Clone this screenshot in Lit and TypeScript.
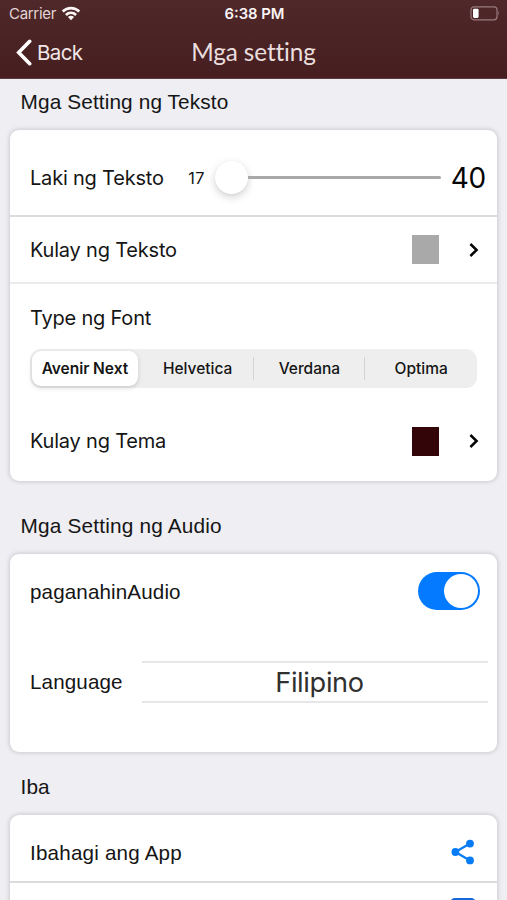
import { LitElement, html, css, svg } from "lit";
import { customElement, state } from "lit/decorators.js";
import { classMap } from "lit/directives/class-map.js";

const chevron = html`<svg class="chevron" width="12" height="18" viewBox="0 0 12 18">
  <path d="M2.4 3 L8.6 9 L2.4 15" fill="none" stroke="#050505" stroke-width="2.5" />
</svg>`;

@customElement("app-root")
export class AppRoot extends LitElement {
  @state() private font = "Avenir Next";

  private fonts = ["Avenir Next", "Helvetica", "Verdana", "Optima"];

  static styles = css`
    :host {
      display: block;
      height: 900px;
      overflow: hidden;
      background: #eeeef3;
      color: #151515;
      font-family: Inter, "Liberation Sans", sans-serif;
      font-size: 20px;
    }
    * { box-sizing: border-box; }
    svg { display: block; flex: none; }
    span, h1, h2 { white-space: nowrap; }
    header {
      height: 79px;
      background: linear-gradient(#4f282a, #461e20);
      border-bottom: 1px solid #5d3a3d;
      color: #f0e6e6;
    }
    .status, .nav {
      display: grid;
      grid-template-columns: 1fr auto 1fr;
      align-items: center;
    }
    .status { height: 27px; padding: 0 7px 0 9px; font-size: 15px; }
    .carrier { display: flex; align-items: center; gap: 5px; color: #e2d5d5; }
    .carrier-name { letter-spacing: -0.3px; }
    .clock { font-weight: 600; letter-spacing: 0; font-size: 14.8px; color: #fbf5f5; }
    .battery { justify-self: end; }
    .nav { height: 51px; padding: 0 15px; }
    .back { display: flex; align-items: center; gap: 4px; font-size: 20.5px; letter-spacing: -0.6px; }
    .title {
      margin: 0;
      padding-bottom: 2px;
      font: 400 24.3px Lato, sans-serif;
      letter-spacing: -0.1px;
      color: #eadede;
    }
    h2 {
      margin: 0;
      padding-left: 20.5px;
      font: 400 20.8px/24px "Liberation Sans", sans-serif;
      letter-spacing: 0.12px;
    }
    .h-text { padding-top: 11px; height: 51px; }
    .h-audio { padding-top: 33px; height: 73px; letter-spacing: 0.18px; }
    .h-other { padding-top: 23px; height: 63px; }
    .card {
      margin: 0 10px;
      background: #fff;
      border-radius: 9px;
      box-shadow: 0 0 4px 1px rgba(0, 0, 0, 0.15);
    }
    .row { display: flex; align-items: center; padding: 0 17px 0 20px; }
    .label { letter-spacing: -0.2px; }
    .helv { font-family: "Liberation Sans", sans-serif; font-size: 20.6px; letter-spacing: 0.13px; }
    .size { height: 87px; padding: 10px 11px 0 20px; border-bottom: 2px solid #dcdcde; }
    .min { margin-left: auto; font-size: 16.2px; letter-spacing: 0.3px; }
    .slider { display: flex; align-items: center; width: 226px; margin: 0 10px; }
    .knob {
      width: 33px;
      height: 33px;
      border-radius: 50%;
      background: #fff;
      box-shadow: 0 3px 9px rgba(0, 0, 0, 0.18), 0 1px 2px rgba(0, 0, 0, 0.04);
    }
    .track { flex: 1; height: 3px; border-radius: 0 2px 2px 0; background: #a9a9a9; }
    .max { font-size: 28px; letter-spacing: -0.2px; color: #050505; }
    .colour { height: 67px; border-bottom: 2px solid #ebebed; }
    .type { height: 65px; padding-top: 3px; }
    .theme { height: 80px; }
    .swatch { width: 27px; height: 29px; margin-left: auto; margin-right: 29px; }
    .grey { background: #a9a9a9; }
    .wine { background: #330408; }
    .segments {
      display: grid;
      grid-template-columns: repeat(4, 1fr);
      height: 39px;
      margin: 0 20px 13px;
      border-radius: 11px;
      background: #eee;
    }
    .segment {
      position: relative;
      display: flex;
      align-items: center;
      justify-content: center;
      font-size: 15.5px;
      font-weight: 500;
      letter-spacing: 0;
    }
    .segment.ruled::before {
      content: "";
      position: absolute;
      left: -1px;
      top: 8px;
      bottom: 8px;
      width: 1px;
      background: #d3d3d4;
    }
    .segment.active {
      margin: 2px 4px 2px 2px;
      border-radius: 9px;
      background: #fff;
      font-weight: 600;
      letter-spacing: -0.05px;
      box-shadow: 0 2px 5px rgba(0, 0, 0, 0.15);
    }
    .audio { height: 75px; padding-bottom: 1px; }
    .audio .helv { padding-top: 1px; }
    .toggle {
      display: flex;
      justify-content: flex-end;
      width: 62px;
      height: 38px;
      margin-left: auto;
      padding: 2px;
      border-radius: 19px;
      background: #037aff;
    }
    .toggle-knob { width: 34px; height: 34px; border-radius: 50%; background: #fff; }
    .language { height: 105px; padding-right: 9px; }
    .picker {
      width: 346px;
      height: 42px;
      margin-left: auto;
      border: solid #e7e7e9;
      border-width: 2px 0;
      text-align: center;
      font-size: 27.2px;
      line-height: 39px;
      letter-spacing: -0.35px;
      padding-left: 9px;
      color: #303030;
    }
    .audio-card { height: 198px; }
    .share { height: 68px; padding-top: 9px; border-bottom: 2px solid #dcdcde; }
    .share .helv { letter-spacing: 0.2px; padding-top: 1px; }
    .share svg { margin-left: auto; margin-right: 5px; margin-bottom: 1px; }
    .next { height: 80px; padding-top: 15px; align-items: flex-start; }
    .next-icon { width: 26px; height: 26px; margin: 0 4px 0 auto; border-radius: 5px; background: #1568dc; }
  `;

  private renderWifi() {
    return svg`<svg width="20" height="15" viewBox="0 0 20 15">
      <g fill="none" stroke="#fbf5f5" stroke-width="2.7">
        <path d="M1.7 5.5 C6.4 .9 13.6 .9 18.3 5.5" />
        <path d="M4.9 9 C7.9 6.2 12.1 6.2 15.1 9" />
      </g>
      <path d="M6.9 11 C8.7 9.4 11.3 9.4 13.1 11 L10 14.2 Z" fill="#fbf5f5" />
    </svg>`;
  }

  render() {
    return html`
      <header>
        <div class="status">
          <div class="carrier"><span class="carrier-name">Carrier</span>${this.renderWifi()}</div>
          <span class="clock">6:38 PM</span>
          <svg class="battery" width="30" height="15" viewBox="0 0 30 15">
            <rect x="1" y=".8" width="26" height="13" rx="3" fill="none" stroke="#987b7d" stroke-width="1.2" />
            <rect x="3" y="2.7" width="5.6" height="9.2" rx="1.3" fill="#fff" />
            <path d="M28.2 5 q1.8 2.3 0 4.6z" fill="#987b7d" />
          </svg>
        </div>
        <div class="nav">
          <div class="back">
            <svg width="18" height="27" viewBox="0 0 18 27">
              <path d="M14.7 2.3 L3.7 13.5 L14.7 24.7" fill="none" stroke="#fff" stroke-width="3.6" stroke-linecap="round" stroke-linejoin="miter" />
            </svg>
            <span>Back</span>
          </div>
          <h1 class="title">Mga setting</h1>
        </div>
      </header>

      <h2 class="h-text">Mga Setting ng Teksto</h2>
      <section class="card">
        <div class="row size">
          <span class="label">Laki ng Teksto</span>
          <span class="min">17</span>
          <div class="slider"><div class="knob"></div><div class="track"></div></div>
          <span class="max">40</span>
        </div>
        <div class="row colour">
          <span class="label">Kulay ng Teksto</span>
          <div class="swatch grey"></div>${chevron}
        </div>
        <div class="row type"><span class="label">Type ng Font</span></div>
        <div class="segments">
          ${this.fonts.map(
            (name, i) => html`<div
              class=${classMap({ segment: true, active: name === this.font, ruled: i > 1 })}
              @click=${() => (this.font = name)}
            >${name}</div>`
          )}
        </div>
        <div class="row theme">
          <span class="label">Kulay ng Tema</span>
          <div class="swatch wine"></div>${chevron}
        </div>
      </section>

      <h2 class="h-audio">Mga Setting ng Audio</h2>
      <section class="card audio-card">
        <div class="row audio">
          <span class="helv">paganahinAudio</span>
          <div class="toggle"><div class="toggle-knob"></div></div>
        </div>
        <div class="row language">
          <span class="helv">Language</span>
          <div class="picker">Filipino</div>
        </div>
      </section>

      <h2 class="h-other">Iba</h2>
      <section class="card">
        <div class="row share">
          <span class="helv">Ibahagi ang App</span>
          <svg width="24" height="26" viewBox="0 0 24 26">
            <path d="M19 4.5 L4.3 13 L19 21.5" fill="none" stroke="#087cf5" stroke-width="2.2" />
            <g fill="#087cf5"><circle cx="19" cy="4.6" r="3.9" /><circle cx="4.4" cy="13" r="3.9" /><circle cx="19" cy="21.4" r="3.9" /></g>
          </svg>
        </div>
        <div class="row next"><div class="next-icon"></div></div>
      </section>
    `;
  }
}
